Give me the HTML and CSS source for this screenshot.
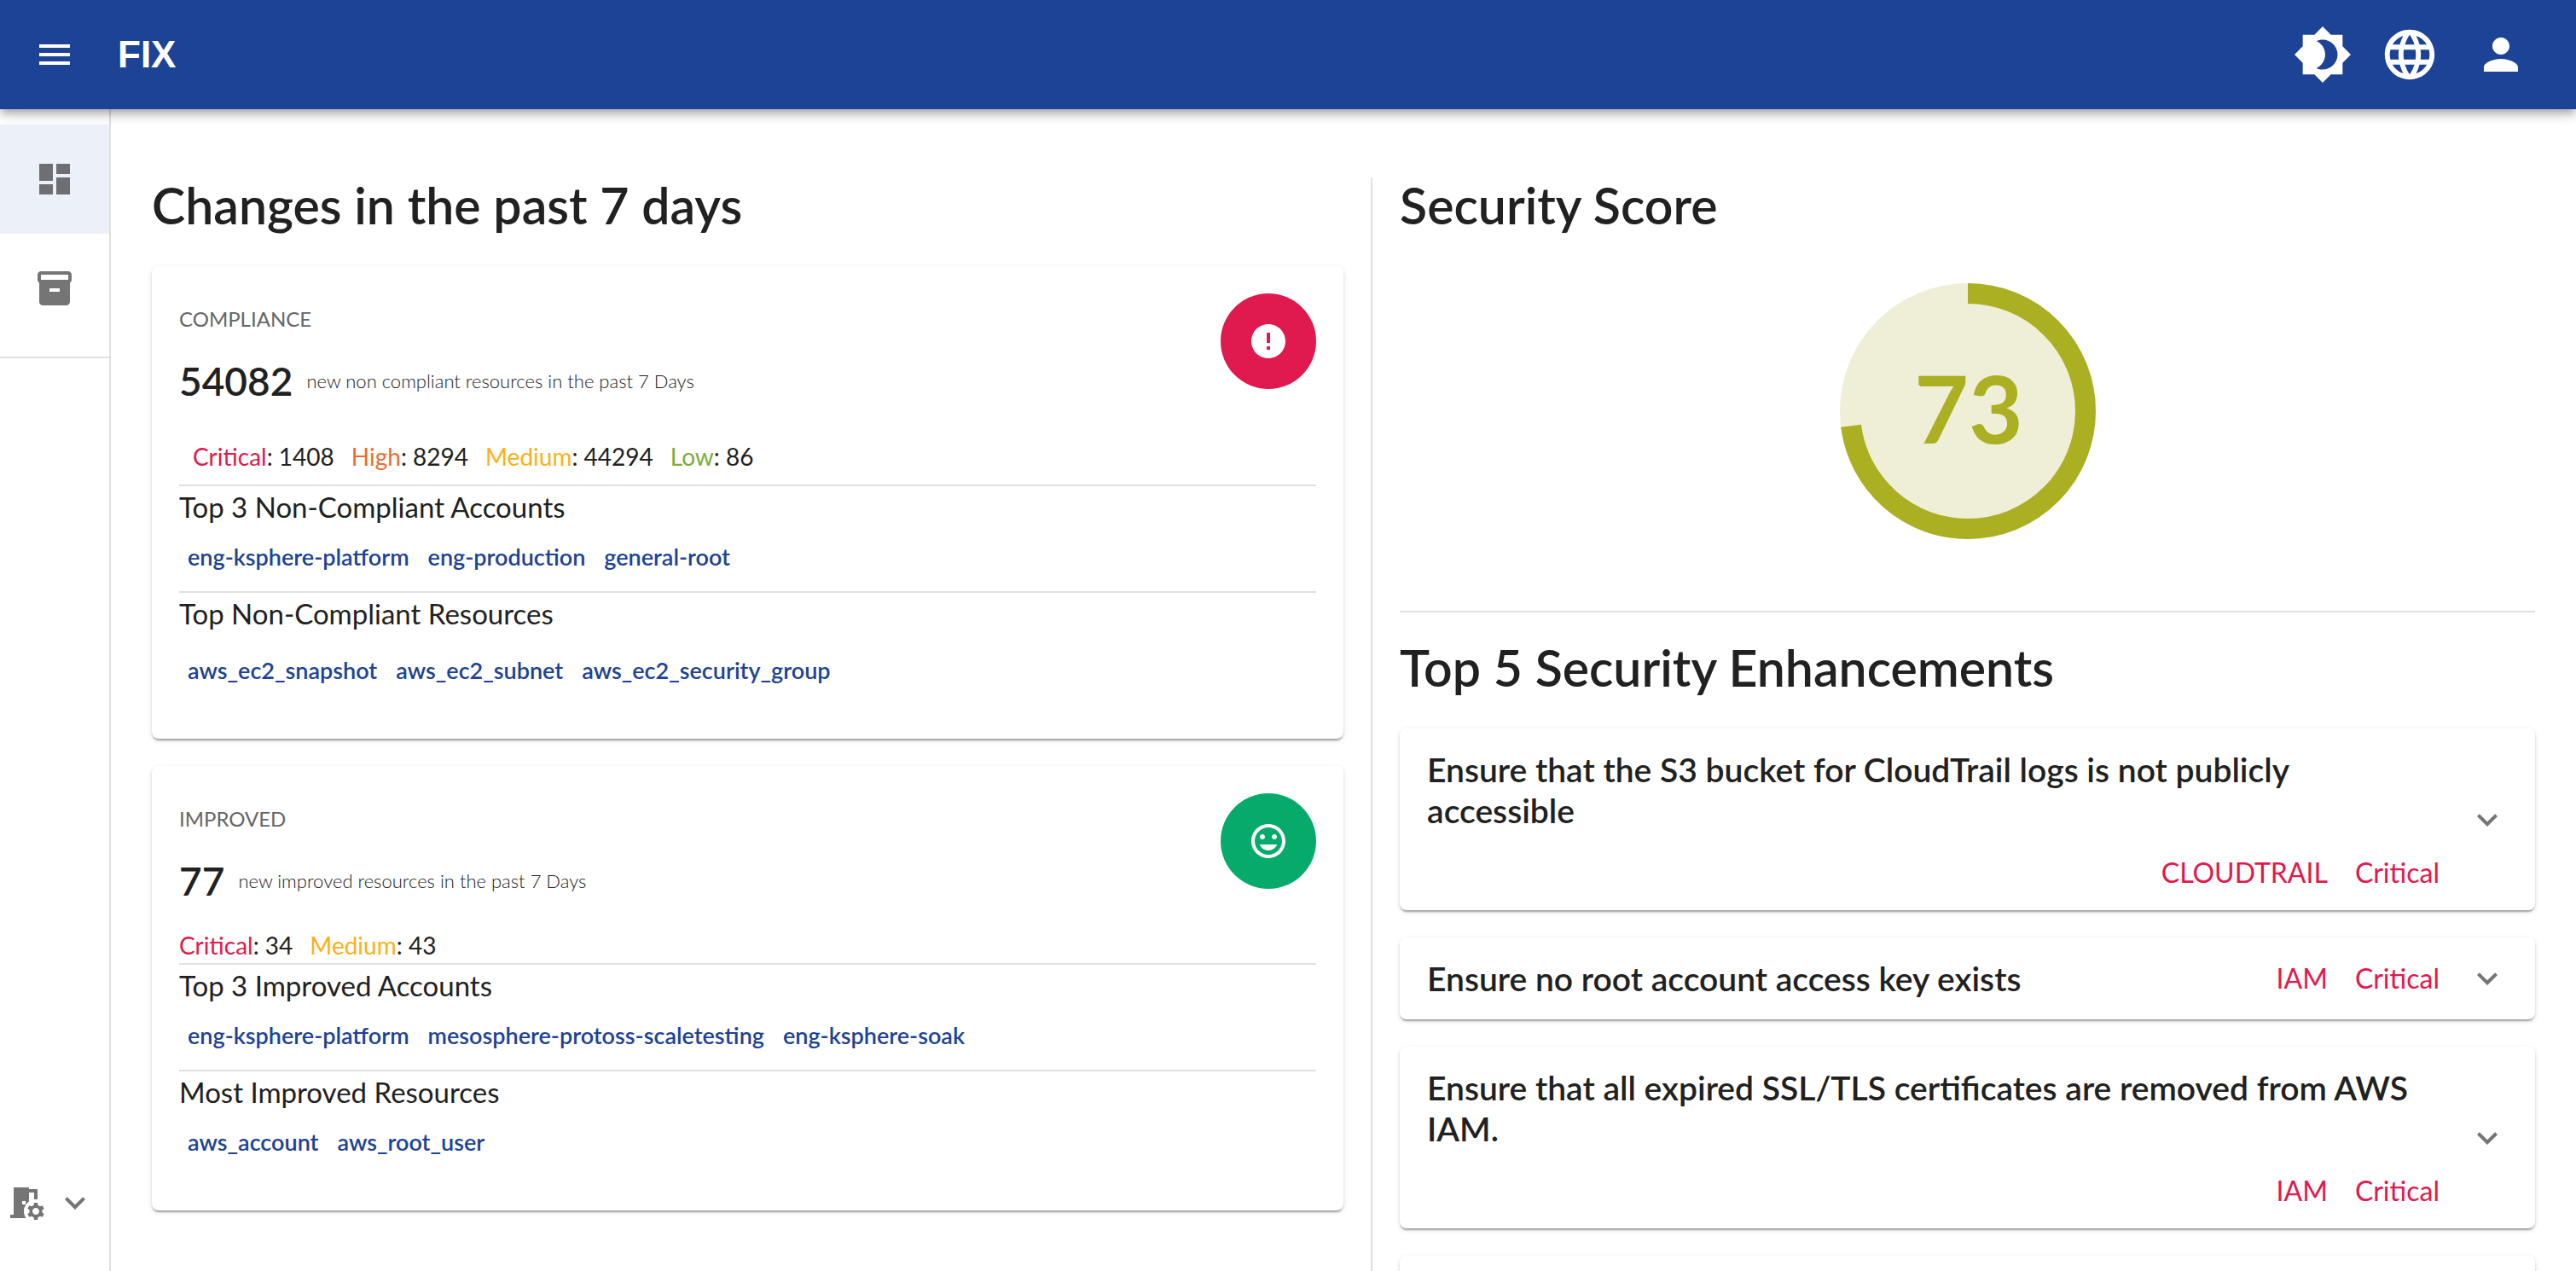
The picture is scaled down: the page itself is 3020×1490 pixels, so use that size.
FILE: index.html
```html
<!DOCTYPE html>
<html lang="en">
<head>
<meta charset="utf-8">
<meta name="viewport" content="width=device-width, initial-scale=1">
<title>FIX</title>
<link rel="stylesheet" href="styles.css">
</head>
<body>
<div class="app">
  <header class="topbar">
    <button class="icon-button" type="button" aria-label="Menu">
      <svg class="icon" viewBox="0 0 24 24"><path d="M3 18h18v-2H3v2zm0-5h18v-2H3v2zm0-7v2h18V6H3z"/></svg>
    </button>
    <a class="brand" href="#">FIX</a>
    <div class="topbar-actions">
      <button class="icon-button" type="button" aria-label="Toggle theme">
        <svg class="icon icon-large" viewBox="0 0 24 24"><path d="M20 8.69V4h-4.69L12 .69 8.69 4H4v4.69L.69 12 4 15.31V20h4.69L12 23.31 15.31 20H20v-4.69L23.31 12 20 8.69zM12 18c-.89 0-1.74-.2-2.5-.55C11.56 16.5 13 14.42 13 12s-1.44-4.5-3.5-5.45C10.26 6.2 11.11 6 12 6c3.31 0 6 2.69 6 6s-2.69 6-6 6z"/></svg>
      </button>
      <button class="icon-button" type="button" aria-label="Language">
        <svg class="icon icon-large" viewBox="0 0 24 24"><path d="M11.99 2C6.47 2 2 6.48 2 12s4.47 10 9.99 10C17.52 22 22 17.52 22 12S17.52 2 11.99 2zm6.93 6h-2.95c-.32-1.25-.78-2.45-1.38-3.56 1.84.63 3.37 1.91 4.33 3.56zM12 4.04c.83 1.2 1.48 2.53 1.91 3.96h-3.82c.43-1.43 1.08-2.76 1.91-3.96zM4.26 14C4.1 13.36 4 12.69 4 12s.1-1.36.26-2h3.38c-.08.66-.14 1.32-.14 2s.06 1.34.14 2H4.26zm.82 2h2.95c.32 1.25.78 2.45 1.38 3.56-1.84-.63-3.37-1.9-4.33-3.56zm2.95-8H5.08c.96-1.66 2.49-2.93 4.33-3.56C8.81 5.55 8.35 6.75 8.03 8zM12 19.96c-.83-1.2-1.48-2.53-1.91-3.96h3.82c-.43 1.43-1.08 2.76-1.91 3.96zM14.34 14H9.66c-.09-.66-.16-1.32-.16-2s.07-1.35.16-2h4.68c.09.65.16 1.32.16 2s-.07 1.34-.16 2zm.25 5.56c.6-1.11 1.06-2.31 1.38-3.56h2.95c-.96 1.65-2.49 2.93-4.33 3.56zM16.36 14c.08-.66.14-1.32.14-2s-.06-1.34-.14-2h3.38c.16.64.26 1.31.26 2s-.1 1.36-.26 2h-3.38z"/></svg>
      </button>
      <button class="icon-button account" type="button" aria-label="Account">
        <svg class="icon icon-medium" viewBox="0 0 24 24"><path d="M12 12c2.21 0 4-1.79 4-4s-1.79-4-4-4-4 1.79-4 4 1.79 4 4 4zm0 2c-2.67 0-8 1.34-8 4v2h16v-2c0-2.66-5.33-4-8-4z"/></svg>
      </button>
    </div>
  </header>

  <div class="body">
    <nav class="sidebar" aria-label="Main">
      <div class="nav-list">
        <a class="nav-item selected" href="#" aria-label="Dashboard">
          <svg class="icon" viewBox="0 0 24 24"><path d="M3 13h8V3H3v10zm0 8h8v-6H3v6zm10 0h8V11h-8v10zm0-18v6h8V3h-8z"/></svg>
        </a>
        <a class="nav-item" href="#" aria-label="Inventory">
          <svg class="icon" viewBox="0 0 24 24"><path d="M20 2H4c-1 0-2 .9-2 2v3.01c0 .72.43 1.34 1 1.69V20c0 1.1 1.1 2 2 2h14c.9 0 2-.9 2-2V8.7c.57-.35 1-.97 1-1.69V4c0-1.1-1-2-2-2zm-5 12H9v-2h6v2zm5-7H4V4l16-.02V7z"/></svg>
        </a>
      </div>
      <button class="workspace" type="button" aria-label="Workspace settings">
        <svg class="icon" viewBox="0 0 24 24"><path d="M14 11.26V6h3v4h2V4h-5V3H5v16H3v2h9.26c-.79-1.13-1.26-2.51-1.26-4 0-2.38 1.19-4.47 3-5.74zM10 11h2v2h-2v-2zm11.69 5.37 1.14-1-1-1.73-1.45.49c-.32-.27-.68-.48-1.08-.63L19 12h-2l-.3 1.49c-.4.15-.76.36-1.08.63l-1.45-.49-1 1.73 1.14 1c-.08.5-.08.76 0 1.26l-1.14 1 1 1.73 1.45-.49c.32.27.68.48 1.08.63L17 22h2l.3-1.49c.4-.15.76-.36 1.08-.63l1.45.49 1-1.73-1.14-1c.08-.51.08-.77 0-1.27zM18 19c-1.1 0-2-.9-2-2s.9-2 2-2 2 .9 2 2-.9 2-2 2z"/></svg>
        <svg class="icon" viewBox="0 0 24 24"><path d="M16.59 8.59 12 13.17 7.41 8.59 6 10l6 6 6-6z"/></svg>
      </button>
    </nav>

    <main class="content">
      <section class="changes">
        <h1 class="title">Changes in the past 7 days</h1>

        <article class="card summary">
          <div class="summary-head">
            <div>
              <p class="overline">COMPLIANCE</p>
              <p class="figure"><strong class="count">54082</strong> <span class="caption">new non compliant resources in the past 7 Days</span></p>
            </div>
            <span class="badge badge-bad">
              <svg class="icon" viewBox="0 0 24 24"><path d="M12 2C6.48 2 2 6.48 2 12s4.48 10 10 10 10-4.48 10-10S17.52 2 12 2zm1 15h-2v-2h2v2zm0-4h-2V7h2v6z"/></svg>
            </span>
          </div>
          <ul class="severities inset">
            <li><span class="critical">Critical</span>: 1408</li>
            <li><span class="high">High</span>: 8294</li>
            <li><span class="medium">Medium</span>: 44294</li>
            <li><span class="low">Low</span>: 86</li>
          </ul>
          <section class="group">
            <h2 class="group-title">Top 3 Non-Compliant Accounts</h2>
            <div class="links">
              <a href="#">eng-ksphere-platform</a>
              <a href="#">eng-production</a>
              <a href="#">general-root</a>
            </div>
          </section>
          <section class="group">
            <h2 class="group-title">Top Non-Compliant Resources</h2>
            <div class="links spaced">
              <a href="#">aws_ec2_snapshot</a>
              <a href="#">aws_ec2_subnet</a>
              <a href="#">aws_ec2_security_group</a>
            </div>
          </section>
        </article>

        <article class="card summary">
          <div class="summary-head">
            <div>
              <p class="overline">IMPROVED</p>
              <p class="figure"><strong class="count">77</strong> <span class="caption">new improved resources in the past 7 Days</span></p>
            </div>
            <span class="badge badge-good">
              <svg class="icon" viewBox="0 0 24 24"><path d="M11.99 2C6.47 2 2 6.48 2 12s4.47 10 9.99 10C17.52 22 22 17.52 22 12S17.52 2 11.99 2zM12 20c-4.42 0-8-3.58-8-8s3.58-8 8-8 8 3.58 8 8-3.58 8-8 8zm3.5-9c.83 0 1.5-.67 1.5-1.5S16.33 8 15.5 8 14 8.67 14 9.5s.67 1.5 1.5 1.5zm-7 0c.83 0 1.5-.67 1.5-1.5S9.33 8 8.5 8 7 8.67 7 9.5 7.67 11 8.5 11zm3.5 6.5c2.33 0 4.31-1.46 5.11-3.5H6.89c.8 2.04 2.78 3.5 5.11 3.5z"/></svg>
            </span>
          </div>
          <ul class="severities">
            <li><span class="critical">Critical</span>: 34</li>
            <li><span class="medium">Medium</span>: 43</li>
          </ul>
          <section class="group">
            <h2 class="group-title">Top 3 Improved Accounts</h2>
            <div class="links">
              <a href="#">eng-ksphere-platform</a>
              <a href="#">mesosphere-protoss-scaletesting</a>
              <a href="#">eng-ksphere-soak</a>
            </div>
          </section>
          <section class="group">
            <h2 class="group-title">Most Improved Resources</h2>
            <div class="links">
              <a href="#">aws_account</a>
              <a href="#">aws_root_user</a>
            </div>
          </section>
        </article>
      </section>

      <section class="security">
        <h1 class="title">Security Score</h1>
        <div class="score">
          <svg class="gauge" viewBox="0 0 300 300" role="img" aria-label="Security score 73">
            <circle class="gauge-disc" cx="150" cy="150" r="150"/>
            <circle class="gauge-ring" cx="150" cy="150" r="138" pathLength="100" stroke-dasharray="73 27" transform="rotate(-90 150 150)"/>
            <text class="gauge-value" x="151" y="188" text-anchor="middle">73</text>
          </svg>
        </div>
        <h1 class="title">Top 5 Security Enhancements</h1>
        <ul class="checks">
          <li class="card check">
            <div class="check-body">
              <h2 class="check-title">Ensure that the S3 bucket for CloudTrail logs is not publicly accessible</h2>
              <p class="tags"><span>CLOUDTRAIL</span><span>Critical</span></p>
            </div>
            <button class="expand" type="button" aria-label="Expand"><svg class="icon" viewBox="0 0 24 24"><path d="M16.59 8.59 12 13.17 7.41 8.59 6 10l6 6 6-6z"/></svg></button>
          </li>
          <li class="card check">
            <div class="check-body">
              <h2 class="check-title">Ensure no root account access key exists</h2>
              <p class="tags"><span>IAM</span><span>Critical</span></p>
            </div>
            <button class="expand" type="button" aria-label="Expand"><svg class="icon" viewBox="0 0 24 24"><path d="M16.59 8.59 12 13.17 7.41 8.59 6 10l6 6 6-6z"/></svg></button>
          </li>
          <li class="card check">
            <div class="check-body">
              <h2 class="check-title">Ensure that all expired SSL/TLS certificates are removed from AWS IAM.</h2>
              <p class="tags"><span>IAM</span><span>Critical</span></p>
            </div>
            <button class="expand" type="button" aria-label="Expand"><svg class="icon" viewBox="0 0 24 24"><path d="M16.59 8.59 12 13.17 7.41 8.59 6 10l6 6 6-6z"/></svg></button>
          </li>
          <li class="card check"></li>
        </ul>
      </section>
    </main>
  </div>
</div>
</body>
</html>
```
FILE: styles.css
```css
:root {
  --primary: #1d4396;
  --text: #212121;
  --muted: #666;
  --icon: #757575;
  --line: #e0e0e0;
  --critical: #e0194e;
  --high: #ef6c35;
  --medium: #fdb016;
  --low: #7aae3b;
  --good: #06ab6c;
  --score: #abb022;
}

* {
  box-sizing: border-box;
  margin: 0;
  padding: 0;
}

body {
  font-family: Lato, "Noto Sans", sans-serif;
  font-size: 28px;
  line-height: 36px;
  color: var(--text);
  background: #fff;
}

ul {
  list-style: none;
}

a {
  color: inherit;
  text-decoration: none;
}

button {
  border: 0;
  background: none;
  color: inherit;
  font: inherit;
  cursor: pointer;
}

.icon {
  display: block;
  width: 48px;
  height: 48px;
  fill: currentColor;
}

.icon-medium {
  width: 60px;
  height: 60px;
}

.icon-large {
  width: 70px;
  height: 70px;
}

.app {
  display: flex;
  flex-direction: column;
  height: 100vh;
  overflow: hidden;
}

/* Top bar */
.topbar {
  z-index: 1;
  display: flex;
  align-items: center;
  flex: none;
  height: 128px;
  padding: 0 48px 0 40px;
  color: #fff;
  background: var(--primary);
  box-shadow: 0 4px 8px -2px rgba(0, 0, 0, 0.2), 0 8px 10px rgba(0, 0, 0, 0.14), 0 2px 20px rgba(0, 0, 0, 0.12);
}

.brand {
  margin-left: 50px;
  font-family: "Liberation Sans", Arial, sans-serif;
  font-size: 44px;
  font-weight: 700;
  line-height: 64px;
}

.topbar-actions {
  display: flex;
  align-items: center;
  gap: 32px;
  margin-left: auto;
}

.account {
  margin: 0 10px;
}

/* Sidebar */
.body {
  display: flex;
  flex: 1;
  min-height: 0;
}

.sidebar {
  display: flex;
  flex-direction: column;
  flex: none;
  justify-content: space-between;
  width: 130px;
  padding-bottom: 56px;
  color: var(--icon);
  border-right: 2px solid var(--line);
}

.nav-list {
  padding: 18px 0 16px;
  border-bottom: 2px solid var(--line);
}

.nav-item {
  display: flex;
  align-items: center;
  justify-content: center;
  height: 128px;
}

.nav-item.selected {
  color: #6d6f73;
  background: #ecf0f8;
}

.workspace {
  display: flex;
  gap: 10px;
  padding-left: 6px;
}

/* Content columns */
.content {
  display: grid;
  flex: 1;
  grid-template-columns: 21fr 20fr;
  min-width: 0;
  padding: 80px 48px 0;
}

.changes {
  padding-right: 32px;
  border-right: 2px solid var(--line);
}

.security {
  padding-left: 32px;
}

.title {
  margin-bottom: 38px;
  font-size: 59px;
  font-weight: 600;
  line-height: 66px;
}

.card {
  background: #fff;
  border-radius: 8px;
  box-shadow: 0 4px 2px -2px rgba(0, 0, 0, 0.2), 0 2px 2px rgba(0, 0, 0, 0.14), 0 2px 6px rgba(0, 0, 0, 0.12);
}

/* Summary cards */
.summary {
  padding: 32px 32px 40px;
}

.summary + .summary {
  margin-top: 32px;
}

.summary-head {
  display: flex;
  justify-content: space-between;
}

.overline {
  padding-top: 13px;
  font-size: 24px;
  line-height: 34px;
  color: var(--muted);
}

.figure {
  display: flex;
  align-items: center;
  gap: 16px;
  padding-top: 24px;
  line-height: 64px;
}

.count {
  font-size: 46px;
  font-weight: 600;
}

.caption {
  font-size: 22px;
  font-weight: 300;
}

.badge {
  display: flex;
  align-items: center;
  justify-content: center;
  width: 112px;
  height: 112px;
  color: #fff;
  border-radius: 50%;
}

.badge-bad {
  background: var(--critical);
}

.badge-good {
  background: var(--good);
}

.severities {
  display: flex;
  gap: 20px;
  padding: 25px 0 3px;
}

.severities.inset {
  padding: 38px 16px 15px;
}

.critical {
  color: var(--critical);
}

.high {
  color: var(--high);
}

.medium {
  color: var(--medium);
}

.low {
  color: var(--low);
}

.group {
  padding-bottom: 17px;
  border-top: 2px solid var(--line);
}

.group-title {
  font-size: 33px;
  font-weight: 400;
  line-height: 48px;
}

.links {
  display: flex;
  gap: 2px;
  padding-top: 12px;
}

.links.spaced {
  padding-top: 20px;
}

.links a {
  padding: 0 10px;
  font-size: 27px;
  font-weight: 600;
  line-height: 46px;
  color: var(--primary);
}

/* Security score */
.score {
  display: flex;
  justify-content: center;
  margin-bottom: 32px;
  padding: 20px 0 84px;
  border-bottom: 2px solid var(--line);
}

.gauge {
  width: 300px;
  height: 300px;
}

.gauge-disc {
  fill: #eeefd6;
}

.gauge-ring {
  fill: none;
  stroke: var(--score);
  stroke-width: 24px;
}

.gauge-value {
  fill: var(--score);
  font-size: 110px;
  font-weight: 700;
}

/* Enhancement list */
.checks {
  display: grid;
  gap: 32px;
}

.check {
  display: flex;
  align-items: center;
  min-height: 96px;
  padding: 0 32px;
}

.check-body {
  display: flex;
  flex: 1;
  flex-wrap: wrap;
  gap: 25px 32px;
  min-height: 96px;
  padding: 24px 0 20px;
}

.check-title {
  padding-right: 8px;
  font-size: 39px;
  font-weight: 600;
  line-height: 48px;
}

.tags {
  display: flex;
  gap: 32px;
  margin-left: auto;
  font-size: 32px;
  line-height: 48px;
  color: var(--critical);
}

.expand {
  margin-left: 32px;
  color: var(--icon);
}
```
